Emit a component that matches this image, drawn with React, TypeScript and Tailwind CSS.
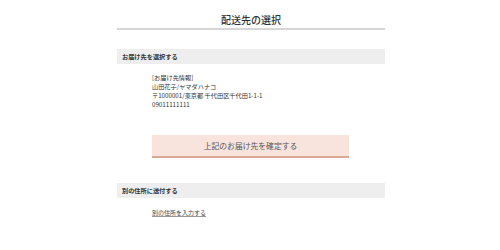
const font = {
  fontFamily: '"Noto Sans CJK JP", "Noto Sans", sans-serif',
};

const SectionBar = ({ label }: { label: string }) => (
  <div className="h-[15px] bg-[#eeeeee] pl-[5px] flex items-center text-[6.2px] font-bold text-[#333]">
    {label}
  </div>
);

const App = () => {
  return (
    <div className="w-[500px] h-[250px] bg-white text-[#333]" style={font}>
      <div className="w-[268px] ml-[117px]">
        <h1 className="pt-[14px] pb-[2px] text-center text-[10px] leading-[12px] font-medium border-b-2 border-[#d6d6d6]">
          配送先の選択
        </h1>

        <div className="mt-[19px]">
          <SectionBar label="お届け先を選択する" />
        </div>

        <div className="mt-[9px] pl-[35px] text-[6.2px] leading-[9px] text-[#333]">
          <p>[お届け先情報]</p>
          <p>山田花子/ヤマダハナコ</p>
          <p>〒1000001/東京都 千代田区千代田1-1-1</p>
          <p>09011111111</p>
        </div>

        <div className="pl-[35px] mt-[26px]">
          <button className="w-[197px] h-[23px] bg-[#f8e3dd] border-b-2 border-[#dba896] text-[7.8px] text-[#555] flex items-center justify-center">
            上記のお届け先を確定する
          </button>
        </div>

        <div className="mt-[25px]">
          <SectionBar label="別の住所に送付する" />
        </div>

        <div className="mt-[10px] pl-[35px] text-[6px] leading-[9px]">
          <a className="underline decoration-[#999] text-[#444]">別の住所を入力する</a>
        </div>
      </div>
    </div>
  );
};

export default App;
